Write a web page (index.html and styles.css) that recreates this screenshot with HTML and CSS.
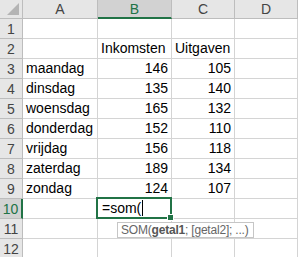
FILE: index.html
```html
<!DOCTYPE html>
<html>
<head>
<meta charset="utf-8">
<link rel="stylesheet" href="styles.css">
</head>
<body>
<div class="sheet">
  <div class="corner"><span class="tri"></span></div>
  <div class="colhead">A</div>
  <div class="colhead sel">B</div>
  <div class="colhead">C</div>
  <div class="colhead">D</div>

  <div class="rowhead">1</div><div class="cell"></div><div class="cell"></div><div class="cell"></div><div class="cell"></div>
  <div class="rowhead">2</div><div class="cell"></div><div class="cell">Inkomsten</div><div class="cell">Uitgaven</div><div class="cell"></div>
  <div class="rowhead">3</div><div class="cell">maandag</div><div class="cell num">146</div><div class="cell num">105</div><div class="cell"></div>
  <div class="rowhead">4</div><div class="cell">dinsdag</div><div class="cell num">135</div><div class="cell num">140</div><div class="cell"></div>
  <div class="rowhead">5</div><div class="cell">woensdag</div><div class="cell num">165</div><div class="cell num">132</div><div class="cell"></div>
  <div class="rowhead">6</div><div class="cell">donderdag</div><div class="cell num">152</div><div class="cell num">110</div><div class="cell"></div>
  <div class="rowhead">7</div><div class="cell">vrijdag</div><div class="cell num">156</div><div class="cell num">118</div><div class="cell"></div>
  <div class="rowhead">8</div><div class="cell">zaterdag</div><div class="cell num">189</div><div class="cell num">134</div><div class="cell"></div>
  <div class="rowhead">9</div><div class="cell">zondag</div><div class="cell num">124</div><div class="cell num">107</div><div class="cell"></div>
  <div class="rowhead sel">10</div><div class="cell"></div><div class="cell active">=som(<span class="caret"></span><span class="handle"></span><div class="tip">SOM(<b>getal1</b>; [getal2]; ...)</div></div><div class="cell"></div><div class="cell"></div>
  <div class="rowhead">11</div><div class="cell"></div><div class="cell"></div><div class="cell"></div><div class="cell"></div>
  <div class="rowhead">12</div><div class="cell"></div><div class="cell"></div><div class="cell"></div><div class="cell"></div>
</div>
</body>
</html>
```
FILE: styles.css
```css
html, body {
  margin: 0;
  padding: 0;
  background: #ffffff;
  overflow: hidden;
}
.sheet {
  display: grid;
  width: 298px;
  grid-template-columns: 23px 75px 74px 63px 1fr;
  grid-template-rows: 19px repeat(12, 20px);
  font-family: "Liberation Sans", Arial, sans-serif;
  font-size: 14px;
  color: #000;
}
.corner, .colhead, .rowhead, .cell {
  box-sizing: border-box;
  border-right: 1px solid #d4d4d4;
  border-bottom: 1px solid #d4d4d4;
}
.corner {
  background: #e6e6e6;
  border-right-color: #bdbdbd;
  border-bottom-color: #bdbdbd;
  position: relative;
}
.tri {
  position: absolute;
  right: 3px;
  bottom: 3px;
  width: 0;
  height: 0;
  border-left: 12px solid transparent;
  border-bottom: 12px solid #b4b4b4;
}
.colhead {
  background: #e6e6e6;
  border-right-color: #bdbdbd;
  border-bottom-color: #bdbdbd;
  color: #444;
  display: flex;
  align-items: center;
  justify-content: center;
  line-height: 16px;
}
.colhead.sel {
  background: #d2d2d2;
  color: #217346;
  border-bottom: 2px solid #217346;
}
.rowhead {
  background: #e6e6e6;
  border-right-color: #bdbdbd;
  border-bottom-color: #bdbdbd;
  color: #444;
  display: flex;
  align-items: flex-end;
  justify-content: center;
  line-height: 17px;
}
.rowhead.sel {
  background: #d2d2d2;
  color: #217346;
  border-right: 2px solid #217346;
}
.cell {
  display: flex;
  align-items: flex-end;
  padding: 0 3px 1px 3px;
  line-height: 17px;
  white-space: nowrap;
}
.cell.num {
  justify-content: flex-end;
}
.active {
  position: relative;
  padding-left: 4px;
}
.active::before {
  content: "";
  position: absolute;
  left: -2px;
  top: -2px;
  right: -1px;
  bottom: -1px;
  border: 2px solid #217346;
  pointer-events: none;
}
.caret {
  display: inline-block;
  width: 1px;
  height: 16px;
  background: #000;
  margin-left: 1px;
  margin-bottom: 1px;
}
.handle {
  position: absolute;
  right: -3px;
  bottom: -3px;
  width: 5px;
  height: 5px;
  background: #217346;
  border: 1px solid #fff;
}
.tip {
  position: absolute;
  left: 19px;
  top: 23px;
  height: 16px;
  box-sizing: border-box;
  background: #fff;
  border: 1px solid #c6c6c6;
  color: #666;
  font-size: 12px;
  letter-spacing: -0.2px;
  line-height: 14px;
  padding: 0 4px 0 3px;
  z-index: 2;
  white-space: nowrap;
}
.tip b {
  color: #555;
}
```
